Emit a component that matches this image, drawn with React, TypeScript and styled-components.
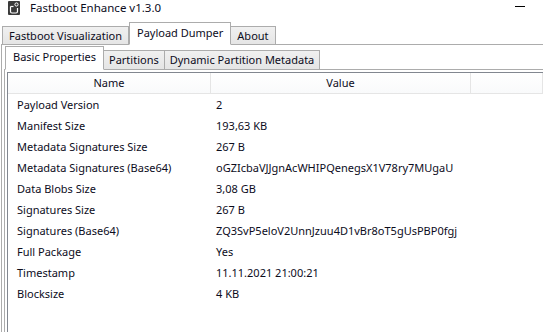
import styled, { createGlobalStyle } from 'styled-components';

type Prop = { name: string; value: string };

const props: Prop[] = [
  { name: 'Payload Version', value: '2' },
  { name: 'Manifest Size', value: '193,63 KB' },
  { name: 'Metadata Signatures Size', value: '267 B' },
  { name: 'Metadata Signatures (Base64)', value: 'oGZIcbaVJJgnAcWHIPQenegsX1V78ry7MUgaU' },
  { name: 'Data Blobs Size', value: '3,08 GB' },
  { name: 'Signatures Size', value: '267 B' },
  { name: 'Signatures (Base64)', value: 'ZQ3SvP5eloV2UnnJzuu4D1vBr8oT5gUsPBP0fgj' },
  { name: 'Full Package', value: 'Yes' },
  { name: 'Timestamp', value: '11.11.2021 21:00:21' },
  { name: 'Blocksize', value: '4 KB' },
];

const GlobalStyle = createGlobalStyle`
  html, body {
    margin: 0;
    padding: 0;
    background: #fff;
  }
  body {
    font-family: "Noto Sans", "Open Sans", sans-serif;
    font-size: 11px;
    color: #0c0c1c;
  }
`;

const Window = styled.div`
  width: 543px;
  height: 332px;
  overflow: hidden;
  background: #fff;
  display: flex;
  flex-direction: column;
`;

const TitleBar = styled.div`
  height: 22px;
  display: flex;
  align-items: flex-start;
  padding: 1px 0 0 8px;
  box-sizing: border-box;
`;

const Title = styled.span`
  margin-left: 10px;
  font-size: 11.5px;
  line-height: 13px;
`;

const Spacer = styled.div`
  flex: 1;
`;

const MinButton = styled.div`
  width: 10px;
  height: 1px;
  background: #000;
  margin: 5px 18px 0 0;
`;

const Body = styled.div`
  flex: 1;
  display: flex;
  flex-direction: column;
  padding-left: 1px;
`;

const TabStrip = styled.div<{ $height: number; $pad: number }>`
  display: flex;
  align-items: flex-end;
  height: ${p => p.$height}px;
  padding-left: ${p => p.$pad}px;
  position: relative;
  z-index: 1;
  margin-bottom: -1px;
`;

const Tab = styled.div<{ $active?: boolean; $h: number; $px: number }>`
  box-sizing: border-box;
  height: ${p => (p.$active ? p.$h + 4 : p.$h)}px;
  padding: 0 ${p => (p.$active ? 7 : p.$px)}px ${p => (p.$active ? 2 : 0)}px;
  display: flex;
  align-items: center;
  border: 1px solid #acacac;
  border-left-width: ${p => (p.$active ? 1 : 0)}px;
  border-bottom-color: ${p => (p.$active ? '#fff' : '#acacac')};
  background: ${p => (p.$active ? '#fff' : 'linear-gradient(#f0f0f0, #e5e5e5)')};
  white-space: nowrap;
  line-height: 16px;

  &:first-child {
    border-left-width: 1px;
  }
`;

const Panel = styled.div`
  flex: 1;
  display: flex;
  flex-direction: column;
  border-top: 1px solid #acacac;
  border-left: 1px solid #acacac;
  padding: 0 0 0 2px;
`;

const InnerPanel = styled.div`
  flex: 1;
  border-top: 1px solid #acacac;
  border-left: 1px solid #acacac;
  padding: 2px 0 0 2px;
  display: flex;
`;

const ListView = styled.div`
  flex: 1;
  border-top: 1px solid #828790;
  border-left: 1px solid #828790;
  display: flex;
  flex-direction: column;
`;

const HeaderRow = styled.div`
  display: flex;
  height: 20px;
  border-bottom: 1px solid #e5e5e5;
  background: linear-gradient(#ffffff, #f9fafb);
`;

const HeaderCell = styled.div<{ $w?: number }>`
  box-sizing: border-box;
  width: ${p => (p.$w ? `${p.$w}px` : 'auto')};
  flex: ${p => (p.$w ? 'none' : '1')};
  border-right: 1px solid #e5e5e5;
  display: flex;
  align-items: center;
  justify-content: center;
  line-height: 16px;
`;

const Row = styled.div`
  display: grid;
  grid-template-columns: 199px 1fr;
  height: 21px;
  padding-left: 4px;
  align-items: center;
  line-height: 16px;
`;

const Cell = styled.div`
  padding-left: 5px;
  white-space: nowrap;
`;

function AppIcon() {
  return (
    <svg width="12" height="14" viewBox="0 0 12 14">
      <rect x="0" y="0" width="12" height="14" rx="1" fill="#3a3a3a" />
      <path d="M2.5 5.5 V10.5 Q2.5 12 4 12 H8 Q9.5 12 9.5 10.5 V7" stroke="#fff" strokeWidth="1.2" fill="none" />
      <path d="M2.5 5.5 H5.5" stroke="#fff" strokeWidth="1.2" />
      <circle cx="8.5" cy="3.5" r="1.6" stroke="#fff" strokeWidth="1" fill="none" />
    </svg>
  );
}

export default function App() {
  return (
    <>
      <GlobalStyle />
      <Window>
        <TitleBar>
          <AppIcon />
          <Title>Fastboot Enhance v1.3.0</Title>
          <Spacer />
          <MinButton />
        </TitleBar>
        <Body>
          <TabStrip $height={23} $pad={1}>
            <Tab $h={19} $px={6}>Fastboot Visualization</Tab>
            <Tab $h={19} $px={6} $active>Payload Dumper</Tab>
            <Tab $h={19} $px={6}>About</Tab>
          </TabStrip>
          <Panel>
            <TabStrip $height={25} $pad={1}>
              <Tab $h={20} $px={5} $active>Basic Properties</Tab>
              <Tab $h={20} $px={5}>Partitions</Tab>
              <Tab $h={20} $px={5}>Dynamic Partition Metadata</Tab>
            </TabStrip>
            <InnerPanel>
              <ListView>
                <HeaderRow>
                  <HeaderCell $w={203}>Name</HeaderCell>
                  <HeaderCell $w={260}>Value</HeaderCell>
                  <HeaderCell />
                </HeaderRow>
                {props.map(p => (
                  <Row key={p.name}>
                    <Cell>{p.name}</Cell>
                    <Cell>{p.value}</Cell>
                  </Row>
                ))}
              </ListView>
            </InnerPanel>
          </Panel>
        </Body>
      </Window>
    </>
  );
}
